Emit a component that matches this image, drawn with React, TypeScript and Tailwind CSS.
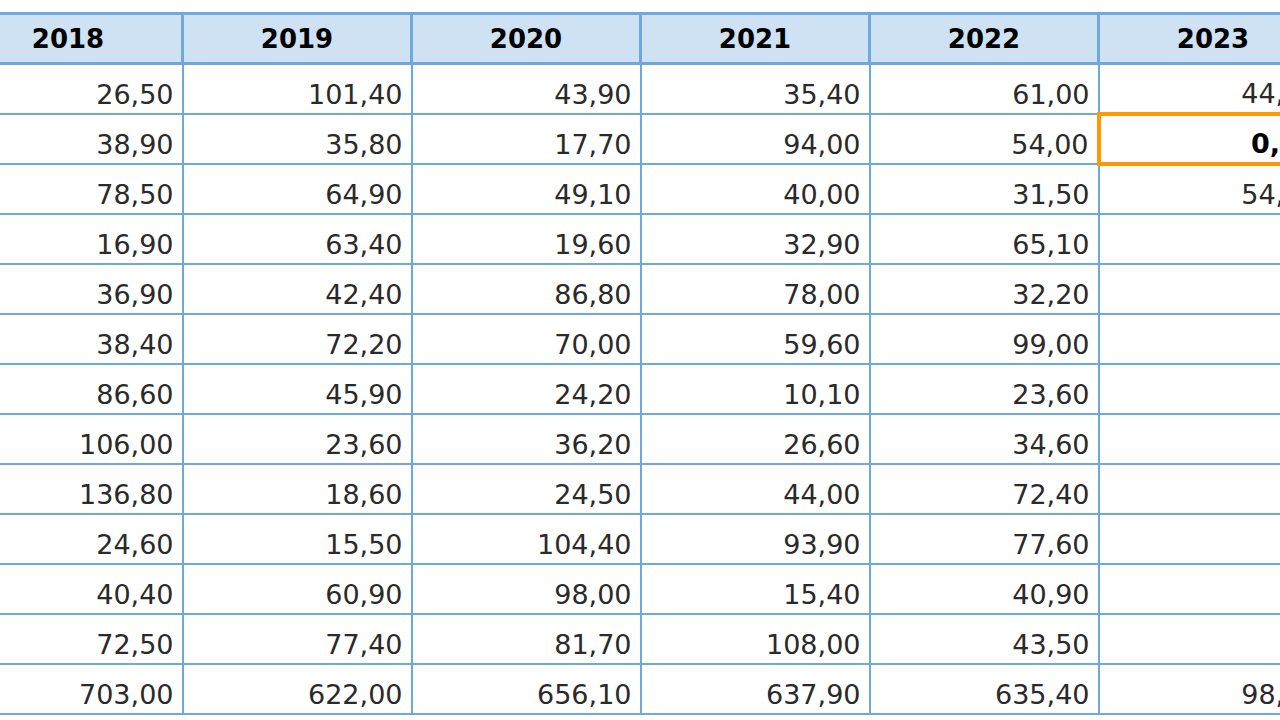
import React from 'react';

const years = ['2018', '2019', '2020', '2021', '2022', '2023'];

// one array per year, last value is the total row
const data: string[][] = [
  ['26,50', '38,90', '78,50', '16,90', '36,90', '38,40', '86,60', '106,00', '136,80', '24,60', '40,40', '72,50', '703,00'],
  ['101,40', '35,80', '64,90', '63,40', '42,40', '72,20', '45,90', '23,60', '18,60', '15,50', '60,90', '77,40', '622,00'],
  ['43,90', '17,70', '49,10', '19,60', '86,80', '70,00', '24,20', '36,20', '24,50', '104,40', '98,00', '81,70', '656,10'],
  ['35,40', '94,00', '40,00', '32,90', '78,00', '59,60', '10,10', '26,60', '44,00', '93,90', '15,40', '108,00', '637,90'],
  ['61,00', '54,00', '31,50', '65,10', '32,20', '99,00', '23,60', '34,60', '72,40', '77,60', '40,90', '43,50', '635,40'],
  ['44,20', '0,00', '54,30', '', '', '', '', '', '', '', '', '', '98,50'],
];

const rowCount = data[0].length;

export default function App() {
  return (
    <div className="w-[1280px] h-[720px] overflow-hidden bg-white pt-3 font-['DejaVu_Sans',sans-serif]">
      <table className="ml-[-48px] w-[1374px] table-fixed border-collapse">
        <colgroup>
          {years.map((y) => (
            <col key={y} className="w-[229px]" />
          ))}
        </colgroup>
        <thead>
          <tr className="h-[50px]">
            {years.map((y) => (
              <th
                key={y}
                className="border-[3px] border-[#6fa8dc] bg-[#cfe2f3] p-0 text-center align-middle text-[26px] font-bold leading-none text-black"
              >
                {y}
              </th>
            ))}
          </tr>
        </thead>
        <tbody>
          {Array.from({ length: rowCount }).map((_, r) => (
            <tr key={r} className="h-[50px]">
              {data.map((col, c) => {
                const selected = c === 5 && r === 1;
                return (
                  <td
                    key={c}
                    className={
                      selected
                        ? 'border-4 border-[#ff9900] p-0 pr-2 pb-[5px] text-right align-bottom text-[27px] font-bold leading-none text-black'
                        : 'border-2 border-[#6fa8dc] p-0 pr-2 pb-[5px] text-right align-bottom text-[27px] leading-none text-[#2a2a2a]'
                    }
                  >
                    {col[r]}
                  </td>
                );
              })}
            </tr>
          ))}
        </tbody>
      </table>
    </div>
  );
}
